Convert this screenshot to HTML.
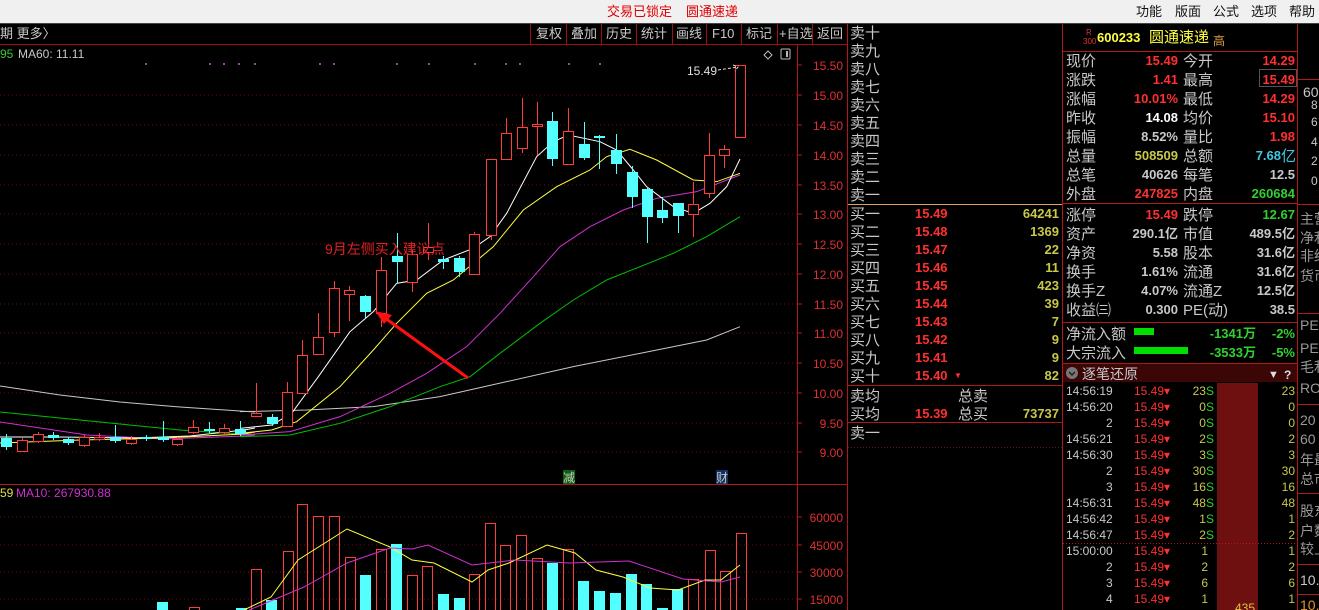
<!DOCTYPE html>
<html><head><meta charset="utf-8">
<style>
html,body{margin:0;padding:0;background:#000;width:1319px;height:610px;overflow:hidden}
svg{display:block}
text{font-family:"Liberation Sans","Noto Sans CJK SC",sans-serif}
.c{font-family:"Liberation Sans","Noto Sans CJK SC",sans-serif}
</style></head><body>
<svg width="1319" height="610" viewBox="0 0 1319 610" xmlns="http://www.w3.org/2000/svg">
<rect width="1319" height="610" fill="#000"/>
<!-- top bar -->
<rect x="0" y="0" width="1319" height="23" fill="#f0f0f0"/>
<line x1="0" y1="23.5" x2="1319" y2="23.5" stroke="#444"/>
<text x="607" y="16" font-size="13" fill="#e00000">交易已锁定</text>
<text x="686" y="16" font-size="13" fill="#e00000">圆通速递</text>
<g font-size="13" fill="#111">
<text x="1136" y="16">功能</text><text x="1175" y="16">版面</text><text x="1213" y="16">公式</text><text x="1251" y="16">选项</text><text x="1289" y="16">帮助</text>
</g>
<!-- toolbar -->
<line x1="0" y1="44.5" x2="847" y2="44.5" stroke="#a01010"/>
<text x="0" y="38" font-size="13" fill="#c8c8c8">期 更多〉</text>
<g stroke="#a01010">
<line x1="530.5" y1="24" x2="530.5" y2="44"/><line x1="566.5" y1="24" x2="566.5" y2="44"/><line x1="601.5" y1="24" x2="601.5" y2="44"/><line x1="636.5" y1="24" x2="636.5" y2="44"/><line x1="672.5" y1="24" x2="672.5" y2="44"/><line x1="706.5" y1="24" x2="706.5" y2="44"/><line x1="741.5" y1="24" x2="741.5" y2="44"/><line x1="777.5" y1="24" x2="777.5" y2="44"/><line x1="812.5" y1="24" x2="812.5" y2="44"/>
</g>
<g font-size="13" fill="#c8c8c8">
<text x="536" y="38">复权</text><text x="571" y="38">叠加</text><text x="606" y="38">历史</text><text x="641" y="38">统计</text><text x="676" y="38">画线</text><text x="712" y="38">F10</text><text x="746" y="38">标记</text><text x="779" y="38">+自选</text><text x="817" y="38">返回</text>
</g>
<!-- legend -->
<text x="0" y="58" font-size="12" fill="#3c3">95</text>
<text x="18" y="58" font-size="12" fill="#c8c8c8">MA60: 11.11</text>
<!-- purple dots -->
<g fill="#a040b0">
<rect x="145" y="63" width="2" height="2"/><rect x="209" y="63" width="2" height="2"/><rect x="223" y="63" width="2" height="2"/><rect x="238" y="63" width="2" height="2"/><rect x="254" y="63" width="2" height="2"/><rect x="319" y="63" width="2" height="2"/><rect x="333" y="63" width="2" height="2"/><rect x="396" y="63" width="2" height="2"/><rect x="428" y="63" width="2" height="2"/><rect x="474" y="63" width="2" height="2"/><rect x="505" y="63" width="2" height="2"/><rect x="519" y="63" width="2" height="2"/><rect x="568" y="63" width="2" height="2"/><rect x="599" y="63" width="2" height="2"/>
</g>
<!-- chart icons -->
<path d="M768 51 l4 4 l-4 4 l-4 -4z" fill="none" stroke="#bbb"/>
<rect x="781" y="49" width="9" height="10" fill="none" stroke="#bbb" rx="1"/><rect x="786" y="51" width="2" height="6" fill="#bbb"/>
<!-- grid -->
<g stroke="#6a1010" stroke-dasharray="1 3">
<line x1="0" y1="95" x2="797" y2="95"/><line x1="0" y1="125" x2="797" y2="125"/><line x1="0" y1="155" x2="797" y2="155"/><line x1="0" y1="185" x2="797" y2="185"/><line x1="0" y1="214" x2="797" y2="214"/><line x1="0" y1="244" x2="797" y2="244"/><line x1="0" y1="274" x2="797" y2="274"/><line x1="0" y1="304" x2="797" y2="304"/><line x1="0" y1="333" x2="797" y2="333"/><line x1="0" y1="363" x2="797" y2="363"/><line x1="0" y1="393" x2="797" y2="393"/><line x1="0" y1="423" x2="797" y2="423"/><line x1="0" y1="452" x2="797" y2="452"/>
<line x1="0" y1="517" x2="797" y2="517"/><line x1="0" y1="545" x2="797" y2="545"/><line x1="0" y1="572" x2="797" y2="572"/><line x1="0" y1="599" x2="797" y2="599"/>
</g>
<!-- axes -->
<line x1="797.5" y1="45" x2="797.5" y2="610" stroke="#b01818"/>
<line x1="847.5" y1="24" x2="847.5" y2="610" stroke="#b01818"/>
<line x1="0" y1="484.5" x2="847" y2="484.5" stroke="#b01818"/>
<g stroke="#b01818">
<line x1="797" y1="65" x2="802" y2="65"/><line x1="797" y1="95" x2="802" y2="95"/><line x1="797" y1="125" x2="802" y2="125"/><line x1="797" y1="155" x2="802" y2="155"/><line x1="797" y1="185" x2="802" y2="185"/><line x1="797" y1="214" x2="802" y2="214"/><line x1="797" y1="244" x2="802" y2="244"/><line x1="797" y1="274" x2="802" y2="274"/><line x1="797" y1="304" x2="802" y2="304"/><line x1="797" y1="333" x2="802" y2="333"/><line x1="797" y1="363" x2="802" y2="363"/><line x1="797" y1="393" x2="802" y2="393"/><line x1="797" y1="423" x2="802" y2="423"/><line x1="797" y1="452" x2="802" y2="452"/>
<line x1="797" y1="517" x2="802" y2="517"/><line x1="797" y1="545" x2="802" y2="545"/><line x1="797" y1="572" x2="802" y2="572"/><line x1="797" y1="599" x2="802" y2="599"/>
</g>
<g font-size="12" fill="#e03030" text-anchor="end">
<text x="843" y="70">15.50</text><text x="843" y="100">15.00</text><text x="843" y="130">14.50</text><text x="843" y="160">14.00</text><text x="843" y="190">13.50</text><text x="843" y="219">13.00</text><text x="843" y="249">12.50</text><text x="843" y="279">12.00</text><text x="843" y="309">11.50</text><text x="843" y="338">11.00</text><text x="843" y="368">10.50</text><text x="843" y="398">10.00</text><text x="843" y="428">9.50</text><text x="843" y="457">9.00</text>
<text x="843" y="522">60000</text><text x="843" y="550">45000</text><text x="843" y="577">30000</text><text x="843" y="604">15000</text>
</g>
<!-- MA lines left part -->
<g fill="none" stroke-width="1">
<polyline stroke="#c8c8c8" points="0,386 60,395 120,402 180,407 255,412"/>
<polyline stroke="#00c000" points="0,412 60,418 120,424 180,430 255,435"/>
<polyline stroke="#d030d0" points="0,422 87,435 163,439 244,436 255,435"/>
<polyline stroke="#ffffff" points="0,437 60,437 135,438 190,436 244,430 255,428"/>
<polyline stroke="#ffff40" points="0,443 80,440 163,438 244,434 255,432"/>
</g>
<g fill="none" stroke-width="3" transform="translate(240,60) scale(0.33333)">
<polyline stroke="#c8c8c8" points="0,1055 200,1050 400,1040 600,1010 800,965 1000,920 1200,880 1400,840 1500,800"/>
<polyline stroke="#00c000" points="0,1130 150,1125 300,1090 450,1040 600,980 690,950 780,880 900,790 1000,720 1100,660 1200,620 1300,580 1400,530 1500,470"/>
<polyline stroke="#d030d0" points="0,1125 150,1115 300,1070 450,1000 560,940 680,860 780,760 880,650 960,560 1050,500 1150,450 1250,415 1370,395 1500,345"/>
<polyline stroke="#ffff40" points="0,1120 95,1110 170,1085 300,980 400,870 470,790 560,700 640,660 760,560 850,450 950,380 1050,330 1100,290 1170,268 1250,300 1360,360 1430,365 1500,340"/>
<polyline stroke="#ffffff" points="0,1105 95,1095 155,1060 235,950 330,815 400,755 470,670 530,660 610,600 700,565 750,530 800,460 890,290 940,245 985,225 1080,245 1130,270 1180,330 1220,380 1300,440 1360,460 1410,430 1460,380 1500,297"/>
</g>
<!-- candles -->
<g id="candles"></g>
<!-- annotation -->
<text x="325" y="254" font-size="14" fill="#e02020">9月左侧买入建议点</text>
<line x1="468" y1="378" x2="385" y2="318" stroke="#ff1010" stroke-width="3"/>
<path d="M375 311 L392 315 L384 324 Z" fill="#ff1010"/>
<text x="687" y="75" font-size="12" fill="#e0e0e0">15.49</text>
<path d="M718 70 L738 67 M733 65 L738 67 L735 71" stroke="#e0e0e0" fill="none" stroke-dasharray="3 2"/>
<!-- 减 财 markers -->
<rect x="563" y="470" width="12" height="14" fill="#106010"/><text x="563" y="482" font-size="12" fill="#c8c8c8">减</text>
<rect x="716" y="470" width="12" height="14" fill="#103060"/><text x="716" y="482" font-size="12" fill="#c8c8c8">财</text>
<!-- volume legend -->
<text x="0" y="497" font-size="12" fill="#e0e040">59</text>
<text x="16" y="497" font-size="12" fill="#d030d0">MA10: 267930.88</text>
<g id="vol"></g>
<g fill="none" stroke-width="1">
<polyline stroke="#ffff40" points="244,610 271,597 298,560 347,529 390,547 412,560 434,563 472,582 488,570 509,563 547,545 575,553 596,570 623,577 650,588 678,590 705,580 721,580 740,565"/>
<polyline stroke="#d030d0" points="249,610 304,587 347,563 390,548 412,549 428,545 472,565 515,560 569,563 629,561 683,579 721,582 740,577"/>
</g>

<!-- order book -->
<g font-size="15" fill="#c8c8c8">
<text x="850" y="38">卖十</text><text x="850" y="56">卖九</text><text x="850" y="74">卖八</text><text x="850" y="92">卖七</text><text x="850" y="110">卖六</text><text x="850" y="128">卖五</text><text x="850" y="146">卖四</text><text x="850" y="164">卖三</text><text x="850" y="182">卖二</text><text x="850" y="200">卖一</text>
<text x="850" y="219">买一</text><text x="850" y="237">买二</text><text x="850" y="255">买三</text><text x="850" y="273">买四</text><text x="850" y="291">买五</text><text x="850" y="309">买六</text><text x="850" y="327">买七</text><text x="850" y="345">买八</text><text x="850" y="363">买九</text><text x="850" y="381">买十</text>
<text x="850" y="401">卖均</text><text x="850" y="419">买均</text><text x="958" y="401">总卖</text><text x="958" y="419">总买</text>
<text x="850" y="438">卖一</text>
</g>
<line x1="848" y1="204.5" x2="1062" y2="204.5" stroke="#e0a060"/>
<line x1="848" y1="385.5" x2="1062" y2="385.5" stroke="#b01818"/>
<line x1="848" y1="422.5" x2="1062" y2="422.5" stroke="#b01818"/>
<line x1="848" y1="447.5" x2="1062" y2="447.5" stroke="#6a1010" stroke-dasharray="1 2"/>
<g font-size="13" font-weight="bold" fill="#ff3030">
<text x="915" y="218">15.49</text><text x="915" y="236">15.48</text><text x="915" y="254">15.47</text><text x="915" y="272">15.46</text><text x="915" y="290">15.45</text><text x="915" y="308">15.44</text><text x="915" y="326">15.43</text><text x="915" y="344">15.42</text><text x="915" y="362">15.41</text><text x="915" y="380">15.40</text><text x="954" y="378" font-size="8">▼</text>
<text x="915" y="418">15.39</text>
</g>
<g font-size="13" font-weight="bold" fill="#c8c84a" text-anchor="end">
<text x="1059" y="218">64241</text><text x="1059" y="236">1369</text><text x="1059" y="254">22</text><text x="1059" y="272">11</text><text x="1059" y="290">423</text><text x="1059" y="308">39</text><text x="1059" y="326">7</text><text x="1059" y="344">9</text><text x="1059" y="362">9</text><text x="1059" y="380">82</text><text x="1059" y="418">73737</text>
</g>
<line x1="1062.5" y1="24" x2="1062.5" y2="610" stroke="#b01818"/>

<!-- quote panel -->
<text x="1086" y="35" font-size="8" fill="#e03030">R</text>
<text x="1083" y="44" font-size="8" fill="#e03030">300</text>
<text x="1097" y="42" font-size="13" font-weight="bold" fill="#ffff40">600233</text>
<text x="1149" y="42" font-size="15" fill="#ffff40">圆通速递</text>
<text x="1213" y="45" font-size="12" fill="#e0a040">高</text>
<g stroke="#b01818">
<line x1="1063" y1="51.5" x2="1297" y2="51.5"/>
<line x1="1063" y1="203.5" x2="1297" y2="203.5"/>
<line x1="1063" y1="322.5" x2="1297" y2="322.5"/>
<line x1="1063" y1="363.5" x2="1297" y2="363.5"/>
<line x1="1297.5" y1="24" x2="1297.5" y2="610"/>
</g>
<rect x="1259.5" y="69.5" width="37" height="17" fill="none" stroke="#555"/>
<g font-size="15" fill="#c8c8c8">
<text x="1066" y="66">现价</text><text x="1066" y="85">涨跌</text><text x="1066" y="104">涨幅</text><text x="1066" y="123">昨收</text><text x="1066" y="142">振幅</text><text x="1066" y="161">总量</text><text x="1066" y="180">总笔</text><text x="1066" y="199">外盘</text>
<text x="1183" y="66">今开</text><text x="1183" y="85">最高</text><text x="1183" y="104">最低</text><text x="1183" y="123">均价</text><text x="1183" y="142">量比</text><text x="1183" y="161">总额</text><text x="1183" y="180">每笔</text><text x="1183" y="199">内盘</text>
<text x="1066" y="220">涨停</text><text x="1066" y="239">资产</text><text x="1066" y="258">净资</text><text x="1066" y="277">换手</text><text x="1066" y="296">换手Z</text><text x="1066" y="315">收益㈢</text>
<text x="1183" y="220">跌停</text><text x="1183" y="239">市值</text><text x="1183" y="258">股本</text><text x="1183" y="277">流通</text><text x="1183" y="296">流通Z</text><text x="1183" y="315">PE(动)</text>
<text x="1066" y="339">净流入额</text><text x="1066" y="358">大宗流入</text>
</g>
<g font-size="13" font-weight="bold" text-anchor="end">
<text x="1178" y="65" fill="#ff3030">15.49</text><text x="1178" y="84" fill="#ff3030">1.41</text><text x="1178" y="103" fill="#ff3030">10.01%</text><text x="1178" y="122" fill="#fff">14.08</text><text x="1178" y="141" fill="#c8c8c8">8.52%</text><text x="1178" y="160" fill="#c8c84a">508509</text><text x="1178" y="179" fill="#c8c8c8">40626</text><text x="1178" y="198" fill="#ff3030">247825</text>
<text x="1295" y="65" fill="#ff3030">14.29</text><text x="1295" y="84" fill="#ff3030">15.49</text><text x="1295" y="103" fill="#ff3030">14.29</text><text x="1295" y="122" fill="#ff3030">15.10</text><text x="1295" y="141" fill="#ff3030">1.98</text><text x="1281" y="160" fill="#40c8e0">7.68</text><text x="1295" y="179" fill="#c8c8c8">12.5</text><text x="1295" y="198" fill="#30d030">260684</text>
<text x="1178" y="219" fill="#ff3030">15.49</text><text x="1178" y="238" fill="#c8c8c8">290.1亿</text><text x="1178" y="257" fill="#c8c8c8">5.58</text><text x="1178" y="276" fill="#c8c8c8">1.61%</text><text x="1178" y="295" fill="#c8c8c8">4.07%</text><text x="1178" y="314" fill="#c8c8c8">0.300</text>
<text x="1295" y="219" fill="#30d030">12.67</text><text x="1295" y="238" fill="#c8c8c8">489.5亿</text><text x="1295" y="257" fill="#c8c8c8">31.6亿</text><text x="1295" y="276" fill="#c8c8c8">31.6亿</text><text x="1295" y="295" fill="#c8c8c8">12.5亿</text><text x="1295" y="314" fill="#c8c8c8">38.5</text>
<text x="1256" y="338" fill="#30d030">-1341万</text><text x="1295" y="338" fill="#30d030">-2%</text>
<text x="1256" y="357" fill="#30d030">-3533万</text><text x="1295" y="357" fill="#30d030">-5%</text>
</g>
<text x="1281" y="161" font-size="15" fill="#40c8e0">亿</text>
<rect x="1134" y="328" width="20" height="7" fill="#00e000"/>
<rect x="1134" y="347" width="54" height="7" fill="#00e000"/>
<!-- 逐笔 header -->
<rect x="1063" y="364" width="234" height="18" fill="#3a0606"/>
<circle cx="1072" cy="373" r="6" fill="#777"/><path d="M1069 372 l3 3 l3 -3" stroke="#222" fill="none" stroke-width="1.5"/>
<text x="1082" y="379" font-size="14" fill="#c8c8c8">逐笔还原</text>
<text x="1268" y="378" font-size="11" fill="#ddd">▼</text><text x="1284" y="379" font-size="12" fill="#ddd" font-weight="bold">?</text>
<rect x="1217" y="383" width="41" height="227" fill="#6e1010"/>
<text x="1235" y="612" font-size="12" fill="#e0c040">435</text>
<line x1="1063" y1="543.5" x2="1297" y2="543.5" stroke="#b01818" stroke-dasharray="1 2"/>
<g font-size="12" fill="#c8c8c8">
<text x="1066" y="395">14:56:19</text><text x="1066" y="411">14:56:20</text><text x="1106" y="427">2</text><text x="1066" y="443">14:56:21</text><text x="1066" y="459">14:56:30</text><text x="1106" y="475">2</text><text x="1106" y="491">3</text><text x="1066" y="507">14:56:31</text><text x="1066" y="523">14:56:42</text><text x="1066" y="539">14:56:47</text><text x="1066" y="555">15:00:00</text><text x="1106" y="571">2</text><text x="1106" y="587">3</text><text x="1106" y="603">4</text>
</g>
<g font-size="12" fill="#ff3030">
<text x="1134" y="395">15.49▾</text><text x="1134" y="411">15.49▾</text><text x="1134" y="427">15.49▾</text><text x="1134" y="443">15.49▾</text><text x="1134" y="459">15.49▾</text><text x="1134" y="475">15.49▾</text><text x="1134" y="491">15.49▾</text><text x="1134" y="507">15.49▾</text><text x="1134" y="523">15.49▾</text><text x="1134" y="539">15.49▾</text><text x="1134" y="555">15.49▾</text><text x="1134" y="571">15.49▾</text><text x="1134" y="587">15.49▾</text><text x="1134" y="603">15.49▾</text>
</g>
<g font-size="12" text-anchor="end" fill="#c8c84a">
<text x="1214" y="395">23<tspan fill="#30d030">S</tspan></text><text x="1214" y="411">0<tspan fill="#30d030">S</tspan></text><text x="1214" y="427">0<tspan fill="#30d030">S</tspan></text><text x="1214" y="443">2<tspan fill="#30d030">S</tspan></text><text x="1214" y="459">3<tspan fill="#30d030">S</tspan></text><text x="1214" y="475">30<tspan fill="#30d030">S</tspan></text><text x="1214" y="491">16<tspan fill="#30d030">S</tspan></text><text x="1214" y="507">48<tspan fill="#30d030">S</tspan></text><text x="1214" y="523">1<tspan fill="#30d030">S</tspan></text><text x="1214" y="539">2<tspan fill="#30d030">S</tspan></text>
<text x="1208" y="555">1</text><text x="1208" y="571">2</text><text x="1208" y="587">6</text><text x="1208" y="603">1</text>
<text x="1295" y="395">23</text><text x="1295" y="411">0</text><text x="1295" y="427">0</text><text x="1295" y="443">2</text><text x="1295" y="459">3</text><text x="1295" y="475">30</text><text x="1295" y="491">16</text><text x="1295" y="507">48</text><text x="1295" y="523">1</text><text x="1295" y="539">2</text><text x="1295" y="555">1</text><text x="1295" y="571">2</text><text x="1295" y="587">6</text><text x="1295" y="603">1</text>
</g>
<!-- far right column -->
<g stroke="#b01818"><line x1="1298" y1="79.5" x2="1319" y2="79.5"/><line x1="1298" y1="204.5" x2="1319" y2="204.5"/><line x1="1298" y1="313.5" x2="1319" y2="313.5"/><line x1="1298" y1="404.5" x2="1319" y2="404.5"/><line x1="1298" y1="493.5" x2="1319" y2="493.5"/><line x1="1298" y1="564.5" x2="1319" y2="564.5"/><line x1="1298" y1="594.5" x2="1319" y2="594.5"/></g>
<g font-size="14" fill="#c8c8c8">
<text x="1303" y="97">60</text><text x="1311" y="109" font-size="12">8</text><text x="1311" y="126" font-size="12">6</text><text x="1311" y="146" font-size="12">4</text><text x="1311" y="165" font-size="12">2</text><text x="1311" y="185" font-size="12">0</text>
<text x="1300" y="224" fill="#999">主营</text><text x="1300" y="243" fill="#999">净利</text><text x="1300" y="261" fill="#999">非经</text><text x="1300" y="281" fill="#999">货币</text>
<text x="1300" y="330" fill="#999">PE</text><text x="1300" y="353" fill="#999">PE</text><text x="1300" y="372" fill="#999">毛利</text><text x="1300" y="393" fill="#999">RO</text>
<text x="1300" y="425" fill="#999">20</text><text x="1300" y="444" fill="#999">60</text><text x="1300" y="465" fill="#999">年最</text><text x="1300" y="484" fill="#999">总市</text>
<text x="1300" y="516" fill="#999">股东</text><text x="1300" y="536" fill="#999">户数</text><text x="1300" y="554" fill="#999">较上</text>
<text x="1300" y="585">10.</text><text x="1300" y="610" fill="#e09030">10.</text>
</g>
</svg>
<script>
var C=[
[6,1,438,447,434,450],[22,0,440,451,438,452],[38,0,434,441,432,443],[53,1,435,438,432,440],[68,1,439,443,437,445],[84,0,437,445,435,447],[99,0,437,439,433,441],[115,1,437,441,425,443],[131,0,439,443,436,445],[146,1,437,439,435,441],[163,1,437,440,421,442],[177,0,439,444,437,446],[193,0,427,432,420,434],[209,1,429,431,422,433],[224,0,428,432,424,434],[240,1,429,434,421,436],
[256,0,413,416,383,417],[272,1,417,424,414,426],[287,0,392,426,382,427],[302,0,355,393,340,394],[318,0,337,354,313,355],[334,0,288,332,281,337],[349,0,290,294,286,321],[365,1,296,312,295,318],[381,0,270,313,257,327],[397,1,256,262,233,283],[412,0,254,282,250,292],[428,0,247,252,223,260],[443,1,259,262,256,269],[459,1,258,272,256,277],[474,0,234,274,232,275],[491,0,159,235,159,240],[506,0,133,159,118,160],[522,0,127,148,98,153],[537,0,124,126,102,155],[552,1,121,159,112,166],[568,0,131,164,108,165],[584,1,144,158,122,160],[599,1,136,138,135,169],[616,1,150,164,134,174],[632,1,172,197,166,208],[647,1,189,217,188,243],[662,1,210,218,197,223],[678,1,203,216,203,233],[693,0,204,214,182,237],[709,0,155,193,133,198],[724,0,149,155,145,168],[740,0,65,137,65,138]];
var s='';C.forEach(function(c){var x=c[0],t=c[2],b=c[3];if(b-t<1)b=t+1;
if(c[1]){s+='<line x1="'+(x+.5)+'" y1="'+c[4]+'" x2="'+(x+.5)+'" y2="'+c[5]+'" stroke="#54ffff"/><rect x="'+(x-5)+'" y="'+t+'" width="11" height="'+(b-t)+'" fill="#54ffff"/>';}
else{s+='<line x1="'+(x+.5)+'" y1="'+c[4]+'" x2="'+(x+.5)+'" y2="'+t+'" stroke="#ff3c3c"/><line x1="'+(x+.5)+'" y1="'+b+'" x2="'+(x+.5)+'" y2="'+c[5]+'" stroke="#ff3c3c"/><rect x="'+(x-4.5)+'" y="'+(t+.5)+'" width="10" height="'+(b-t)+'" fill="#000" stroke="#ff3c3c"/>';}});
document.getElementById('candles').innerHTML=s;
var V=[[157,1,602],[189,0,607],[236,1,608],[251,0,569],[266,1,600],[283,0,551],[297,0,504],[313,0,516],[329,0,516],[345,0,557],[360,1,575],[376,0,549],[391,1,544],[407,0,575],[422,0,566],[438,1,594],[454,1,598],[469,0,574],[485,0,523],[500,0,545],[516,0,535],[532,0,558],[547,1,563],[563,0,549],[578,1,581],[594,1,591],[610,1,593],[626,1,574],[641,1,584],[657,1,608],[672,1,589],[688,0,579],[705,0,550],[720,0,571],[736,0,533]];
var v='';V.forEach(function(c){if(c[1])v+='<rect x="'+c[0]+'" y="'+c[2]+'" width="11" height="'+(612-c[2])+'" fill="#54ffff"/>';else v+='<rect x="'+(c[0]+.5)+'" y="'+(c[2]+.5)+'" width="10" height="'+(612-c[2])+'" fill="none" stroke="#ff3c3c"/>';});
document.getElementById('vol').innerHTML=v;
</script>
</body></html>
